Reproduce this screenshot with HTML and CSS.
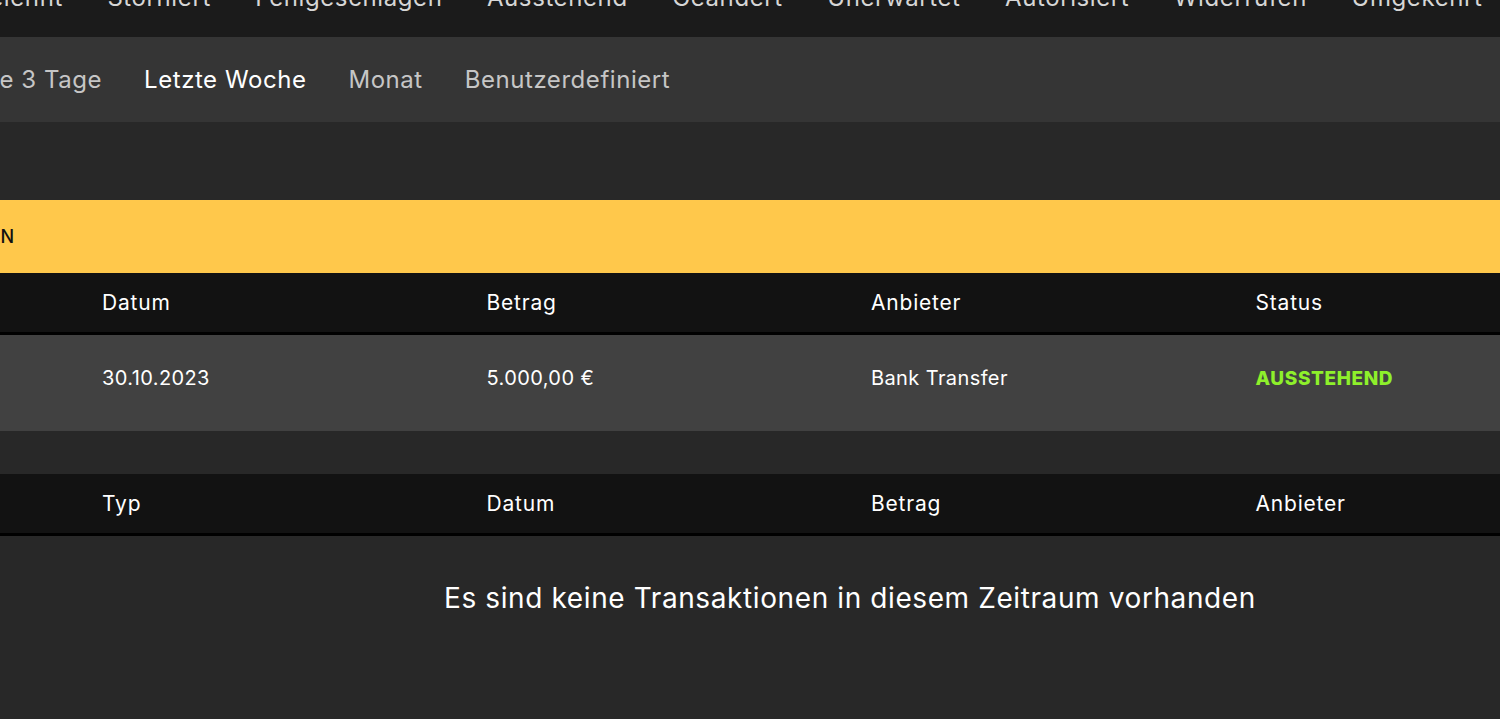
FILE: index.html
```html
<!DOCTYPE html>
<html lang="de">
<head>
<meta charset="utf-8">
<title>Transaktionen</title>
<link rel="stylesheet" href="styles.css">
</head>
<body>
<div class="page">
  <nav class="status-nav">
    <span class="status-item">Alle</span>
    <span class="status-item">Erfolgreich</span>
    <span class="status-item">Abgelehnt</span>
    <span class="status-item">Storniert</span>
    <span class="status-item">Fehlgeschlagen</span>
    <span class="status-item">Ausstehend</span>
    <span class="status-item">Geändert</span>
    <span class="status-item">Unerwartet</span>
    <span class="status-item">Autorisiert</span>
    <span class="status-item">Widerrufen</span>
    <span class="status-item">Umgekehrt</span>
  </nav>
  <nav class="period-nav">
    <span class="period-item">Heute</span>
    <span class="period-item">Letzte 3 Tage</span>
    <span class="period-item active">Letzte Woche</span>
    <span class="period-item">Monat</span>
    <span class="period-item">Benutzerdefiniert</span>
  </nav>

  <section class="content">
    <div class="section-title"><span class="title-text">AUSSTEHENDE TRANSAKTIONEN</span></div>
    <div class="table">
      <div class="row head">
        <div class="cell">Typ</div>
        <div class="cell">Datum</div>
        <div class="cell">Betrag</div>
        <div class="cell">Anbieter</div>
        <div class="cell">Status</div>
        <div class="cell"></div>
      </div>
      <div class="row body">
        <div class="cell">Einzahlung</div>
        <div class="cell">30.10.2023</div>
        <div class="cell">5.000,00 €</div>
        <div class="cell">Bank Transfer</div>
        <div class="cell status pending">AUSSTEHEND</div>
        <div class="cell"></div>
      </div>
    </div>

    <div class="table second">
      <div class="row head">
        <div class="cell">ID</div>
        <div class="cell">Typ</div>
        <div class="cell">Datum</div>
        <div class="cell">Betrag</div>
        <div class="cell">Anbieter</div>
        <div class="cell">Status</div>
      </div>
      <div class="empty">Es sind keine Transaktionen in diesem Zeitraum vorhanden</div>
    </div>
  </section>
</div>
</body>
</html>
```
FILE: styles.css
```css
html, body {
  margin: 0;
  padding: 0;
  background: #282828;
  overflow: hidden;
}
body {
  font-family: "Inter", "Noto Sans", sans-serif;
  color: #ffffff;
  height: 719px;
}
.page {
  margin-top: -43px;
}
.status-nav {
  height: 80px;
  background: #1b1b1b;
  display: flex;
  align-items: center;
  gap: 44.5px;
  margin-left: -322px;
  white-space: nowrap;
}
.status-item {
  font-size: 24px;
  letter-spacing: 0.6px;
  color: #d6d6d6;
  flex: none;
}
.period-nav {
  height: 85px;
  background: #353535;
  display: flex;
  align-items: center;
  gap: 42px;
  margin-left: -172px;
  white-space: nowrap;
}
.period-item {
  font-size: 24px;
  letter-spacing: 0.55px;
  color: #c6c6c6;
  flex: none;
}
.period-item.active {
  color: #ffffff;
}
.content {
  padding-top: 78px;
  margin-left: -303.5px;
  width: 2307px;
}
.section-title {
  height: 73px;
  background: #ffc84b;
  display: flex;
  align-items: center;
  padding-left: 21px;
}
.title-text {
  color: #111;
  font-size: 18px;
  font-weight: 500;
  letter-spacing: 0.15px;
  white-space: nowrap;
}
.row {
  display: flex;
}
.cell {
  width: 384.5px;
  flex: none;
  box-sizing: border-box;
  padding-left: 21px;
  font-size: 20px;
  letter-spacing: 0.4px;
  white-space: nowrap;
}
.row.head {
  height: 59px;
  background: #121212;
  border-bottom: 3px solid #000;
  align-items: center;
}
.row.head .cell {
  font-size: 21px;
  letter-spacing: 0.8px;
}
.row.body {
  height: 96px;
  box-sizing: border-box;
  padding-bottom: 10px;
  background: #414141;
  align-items: center;
}
.status.pending {
  color: #8ef02b;
  font-weight: 800;
  font-size: 19px;
  letter-spacing: 0.6px;
}
.table.second {
  margin-top: 43px;
}
.empty {
  text-align: center;
  font-size: 28px;
  letter-spacing: 0.6px;
  padding-top: 45px;
  color: #ffffff;
}
```
